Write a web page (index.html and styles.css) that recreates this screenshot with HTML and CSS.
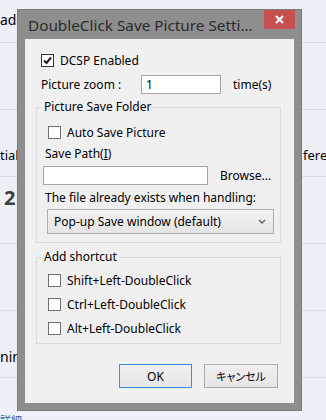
FILE: index.html
```html
<!DOCTYPE html>
<html lang="en">
<head>
    <meta charset="UTF-8">
    <title>DoubleClick Save Picture Settings</title>
    <link rel="stylesheet" href="styles.css">
</head>
<body>
    <!-- page behind the dialog -->
    <div class="page">
        <div class="row row-first"><span class="cell">add</span></div>
        <div class="row"></div>
        <div class="row row-split"><span class="cell">tial</span><span class="cell">feren</span></div>
        <div class="row row-num"><span class="num">2</span></div>
        <div class="row"></div>
        <div class="row row-low"><span class="cell">nin</span></div>
        <div class="row row-link"><span class="link">詳細</span></div>
    </div>

    <!-- Settings dialog -->
    <div class="dialog">
        <div class="titlebar">
            <span class="title">DoubleClick Save Picture Setti...</span>
            <span class="close">
                <svg width="9" height="9" viewBox="0 0 9 9"><path d="M1 1L8 8M8 1L1 8" stroke="#fff" stroke-width="2"/></svg>
            </span>
        </div>

        <div class="client">
            <div class="check-row top-check">
                <span class="box box-on">
                    <svg width="11" height="11" viewBox="0 0 11 11"><path d="M2 5.5L4.5 8L9 2.5" fill="none" stroke="#1e1e1e" stroke-width="2"/></svg>
                </span>
                <span>DCSP Enabled</span>
            </div>

            <div class="zoom-row">
                <span class="zoom-label">Picture zoom :</span>
                <span class="field zoom-field">1</span>
                <span class="unit">time(s)</span>
            </div>

            <div class="group">
                <div class="legend">Picture Save Folder</div>
                <div class="check-row group-check first-check">
                    <span class="box"></span>
                    <span>Auto Save Picture</span>
                </div>
                <div class="plain path-label">Save Path(<u>I</u>)</div>
                <div class="path-row">
                    <span class="field path-field"></span>
                    <span class="browse">Browse...</span>
                </div>
                <div class="plain exists-label">The file already exists when handling:</div>
                <div class="select">
                    <span>Pop-up Save window (default)</span>
                    <svg width="8" height="5" viewBox="0 0 8 5"><path d="M1 1L4 4L7 1" fill="none" stroke="#5a5a5a" stroke-width="1.3"/></svg>
                </div>
            </div>

            <div class="group group-second">
                <div class="legend">Add shortcut</div>
                <div class="check-row group-check first-check">
                    <span class="box"></span>
                    <span>Shift+Left-DoubleClick</span>
                </div>
                <div class="check-row group-check">
                    <span class="box"></span>
                    <span>Ctrl+Left-DoubleClick</span>
                </div>
                <div class="check-row group-check">
                    <span class="box"></span>
                    <span>Alt+Left-DoubleClick</span>
                </div>
            </div>

            <div class="buttons">
                <button class="btn btn-default">OK</button>
                <button class="btn btn-cancel">キャンセル</button>
            </div>
        </div>
    </div>
</body>
</html>
```

FILE: styles.css
```css
* {
    margin: 0;
    padding: 0;
    box-sizing: border-box;
}

body {
    width: 326px;
    height: 420px;
    overflow: hidden;
    position: relative;
    background-color: #edf1f7;
    font-family: "Noto Sans", "Noto Sans CJK JP", sans-serif;
    color: #000;
}

/* Page behind */
.row {
    height: 67px;
    border-bottom: 1px solid #d5dbe4;
    font-size: 14px;
    line-height: 16px;
    white-space: nowrap;
}

.row-first {
    height: 43px;
    padding-top: 12px;
}

.row-split {
    display: grid;
    grid-template-columns: 303px 1fr;
    padding-top: 37px;
    font-size: 13px;
}

.row-num {
    padding-top: 9px;
}

.num {
    font-size: 20px;
    line-height: 24px;
    font-weight: bold;
    color: #3c3c3c;
    margin-left: 4px;
}

.row-low {
    padding-top: 38px;
}

.row-link {
    height: auto;
    border-bottom: none;
    padding-top: 34px;
}

.link {
    color: #1a5fb4;
    font-size: 11px;
    line-height: 12px;
}

/* Dialog */
.dialog {
    position: absolute;
    left: 17px;
    top: 9px;
    width: 285px;
    height: 402px;
    background-color: #8e8e8e;
    border: 1px solid #7b7b7b;
    padding: 0 7px 7px;
    display: flex;
    flex-direction: column;
}

.titlebar {
    height: 29px;
    display: flex;
    align-items: flex-start;
}

.title {
    margin: 5px 0 0 3px;
    font-size: 15.3px;
    line-height: 20px;
    color: #2b2b2b;
    white-space: nowrap;
}

.close {
    margin-left: auto;
    margin-right: -1px;
    width: 31px;
    height: 19px;
    background-color: #c75050;
    display: flex;
    align-items: center;
    justify-content: center;
}

.client {
    flex: 1;
    background-color: #f0f0f0;
    font-size: 12px;
    line-height: 16px;
}

.check-row {
    display: flex;
    align-items: center;
    gap: 6px;
    height: 13px;
}

.box {
    width: 13px;
    height: 13px;
    border: 1px solid #707070;
    background-color: #fff;
    display: flex;
    align-items: center;
    justify-content: center;
}

.box-on {
    border-color: #333;
}

.top-check {
    margin: 15px 0 0 16px;
}

.zoom-row {
    display: flex;
    align-items: center;
    height: 19px;
    margin-top: 8px;
    padding-left: 16px;
}

.zoom-label {
    width: 100px;
}

.field {
    height: 19px;
    background-color: #fff;
    border: 1px solid #a6a6a6;
    padding-left: 4px;
    line-height: 17px;
}

.zoom-field {
    width: 80px;
}

.unit {
    margin-left: 12px;
}

/* Group boxes */
.group {
    margin: 13px 13px 0 11px;
    border: 1px solid #dcdcdc;
    padding-bottom: 8px;
}

.group-second {
    margin-top: 14px;
}

.legend {
    width: fit-content;
    margin: -9px 0 0 5px;
    padding: 0 2px;
    background-color: #f0f0f0;
}

.group-check {
    margin: 11px 0 0 11px;
}

.first-check {
    margin-top: 11px;
}

.group-second .first-check {
    margin-top: 9px;
}

.path-label {
    margin: 7px 0 0 8px;
}

.path-row {
    display: flex;
    align-items: center;
    margin: 4px 0 0 6px;
}

.path-field {
    width: 165px;
}

.browse {
    margin-left: 12px;
}

.exists-label {
    margin: 5px 0 0 8px;
}

.select {
    margin: 3px 6px 0 10px;
    height: 25px;
    border: 1px solid #acacac;
    background: linear-gradient(#f2f2f2, #e5e5e5);
    display: flex;
    align-items: center;
    justify-content: space-between;
    padding: 0 7px 0 6px;
}

.buttons {
    display: flex;
    justify-content: flex-end;
    gap: 12px;
    margin-top: 20px;
    padding-right: 16px;
}

.btn {
    height: 24px;
    font-family: "Noto Sans", "Noto Sans CJK JP", sans-serif;
    font-size: 12px;
    color: #000;
    background: linear-gradient(#f0f0f0, #e5e5e5);
    border: 1px solid #adadad;
}

.btn-default {
    width: 73px;
    border-color: #3c8ce0;
}

.btn-cancel {
    width: 74px;
    font-size: 11px;
    font-feature-settings: "palt";
}
```
